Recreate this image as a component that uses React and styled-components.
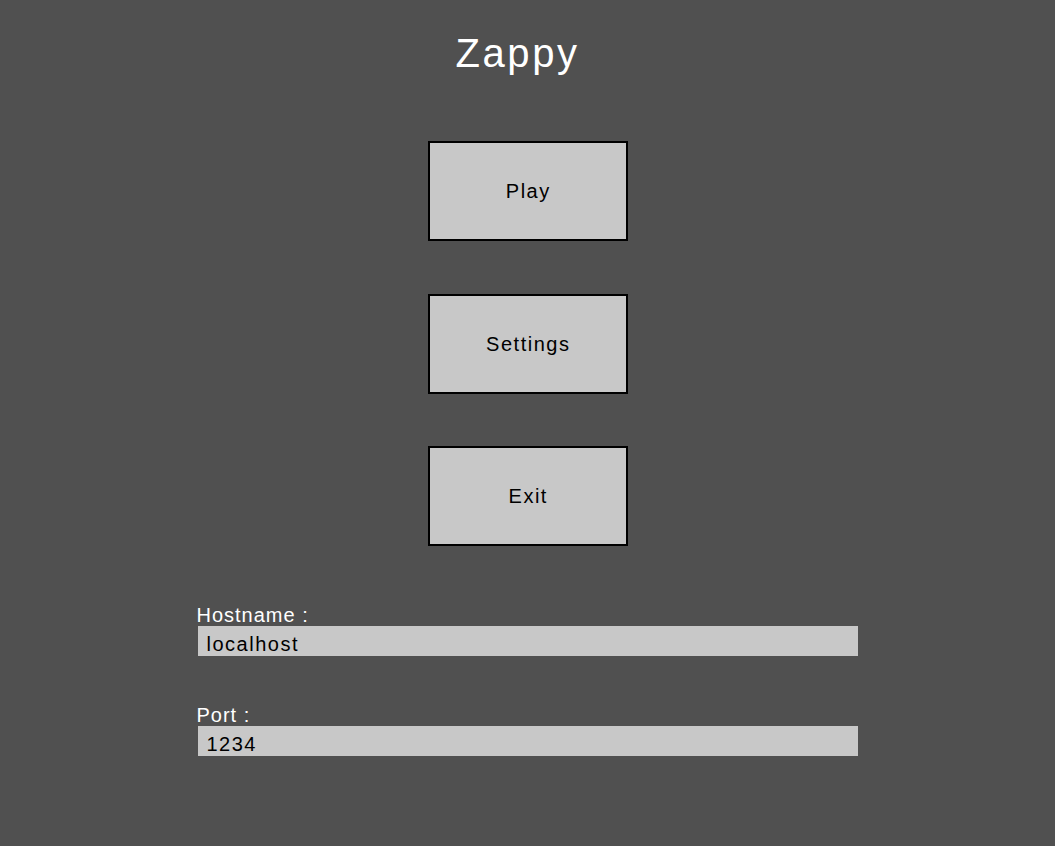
import React from "react";
import styled, { createGlobalStyle } from "styled-components";

const GlobalStyle = createGlobalStyle`
  html, body {
    margin: 0;
    padding: 0;
    background: #505050;
  }
  body {
    font-family: "Liberation Sans", Arial, sans-serif;
  }
`;

const Page = styled.div`
  min-height: 846px;
  background: #505050;
  display: flex;
  flex-direction: column;
  align-items: center;
  padding-top: 33px;
  box-sizing: border-box;
`;

const Title = styled.h1`
  margin: 0 20px 0 0;
  font-family: "Liberation Sans", Arial, sans-serif;
  font-weight: 400;
  font-size: 40px;
  line-height: 40px;
  letter-spacing: 2.6px;
  color: #ffffff;
`;

const Menu = styled.nav`
  margin-top: 68px;
  display: flex;
  flex-direction: column;
  gap: 52.5px;
`;

const MenuButton = styled.button`
  width: 200px;
  height: 100px;
  box-sizing: border-box;
  border: 2px solid #000000;
  border-radius: 0;
  background: #c8c8c8;
  color: #000000;
  font-family: "Liberation Sans", Arial, sans-serif;
  font-size: 20px;
  line-height: 20px;
  letter-spacing: 1.5px;
  padding: 0 0 0 1.5px;
  cursor: pointer;
`;

const Form = styled.form`
  margin-top: 59px;
  width: 660px;
  display: flex;
  flex-direction: column;
  gap: 49px;
`;

const FieldGroup = styled.div`
  display: flex;
  flex-direction: column;
  gap: 1px;
`;

const Label = styled.label`
  color: #ffffff;
  font-family: "Liberation Sans", Arial, sans-serif;
  font-size: 20px;
  line-height: 20px;
  letter-spacing: 1px;
  margin-left: -1px;
`;

const Input = styled.input`
  width: 100%;
  height: 30px;
  box-sizing: border-box;
  border: none;
  outline: none;
  border-radius: 0;
  background: #c8c8c8;
  color: #000000;
  font-family: "Liberation Sans", Arial, sans-serif;
  font-size: 20px;
  line-height: 20px;
  letter-spacing: 1.5px;
  padding: 8px 9px 2px;
  margin: 0;
`;

export default function App() {
  return (
    <>
      <GlobalStyle />
      <Page>
        <Title>Zappy</Title>
        <Menu>
          <MenuButton type="button">Play</MenuButton>
          <MenuButton type="button">Settings</MenuButton>
          <MenuButton type="button">Exit</MenuButton>
        </Menu>
        <Form onSubmit={(e) => e.preventDefault()}>
          <FieldGroup>
            <Label htmlFor="hostname">Hostname :</Label>
            <Input id="hostname" defaultValue="localhost" />
          </FieldGroup>
          <FieldGroup>
            <Label htmlFor="port">Port :</Label>
            <Input id="port" defaultValue="1234" />
          </FieldGroup>
        </Form>
      </Page>
    </>
  );
}
